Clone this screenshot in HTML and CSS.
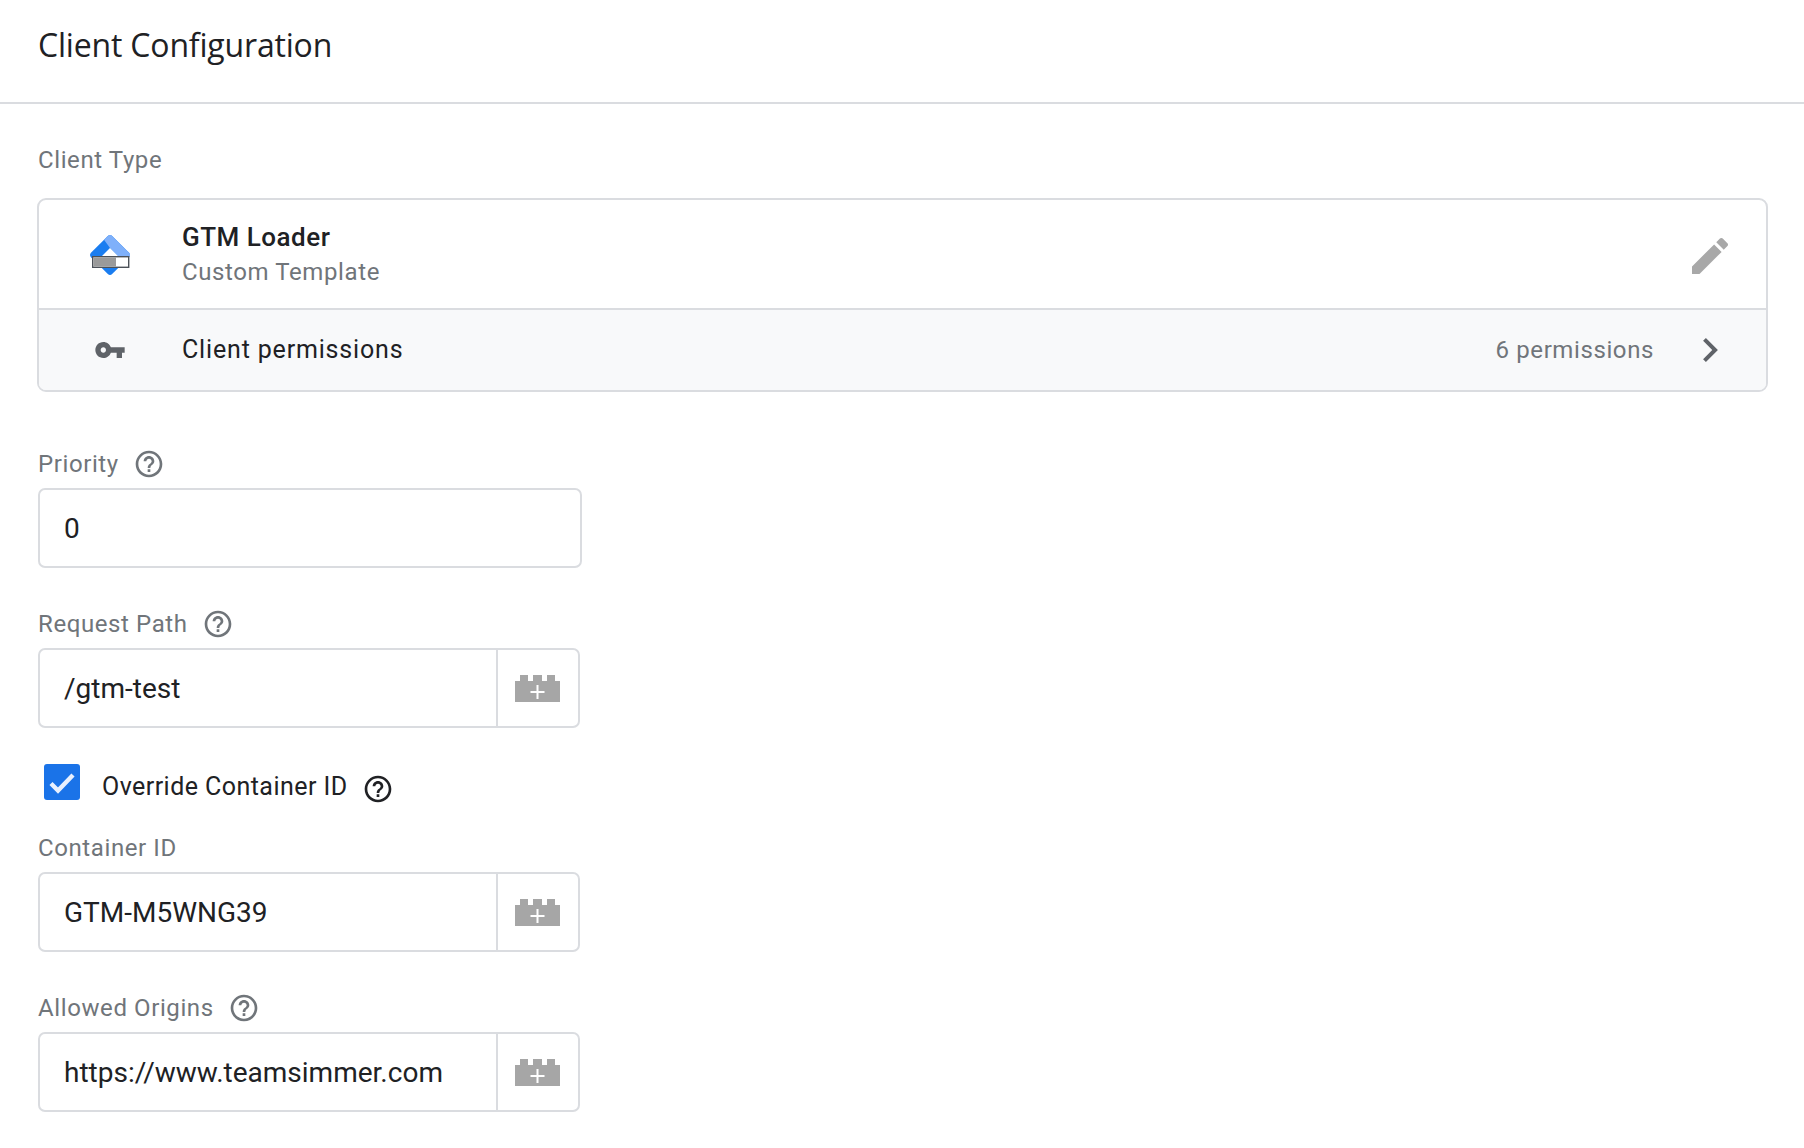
FILE: index.html
```html
<!DOCTYPE html>
<html lang="en">
<head>
<meta charset="utf-8">
<title>Client Configuration</title>
<link rel="stylesheet" href="styles.css">
</head>
<body>
<svg class="defs" width="0" height="0" aria-hidden="true">
  <defs>
    <symbol id="help" viewBox="0 0 24 24"><path d="M11 18h2v-2h-2v2zm1-16C6.48 2 2 6.48 2 12s4.48 10 10 10 10-4.48 10-10S17.52 2 12 2zm0 18c-4.41 0-8-3.59-8-8s3.59-8 8-8 8 3.59 8 8-3.59 8-8 8zm0-14c-2.21 0-4 1.79-4 4h2c0-1.1.9-2 2-2s2 .9 2 2c0 2-3 1.75-3 5h2c0-2.25 3-2.5 3-5 0-2.21-1.79-4-4-4z"/></symbol>
    <symbol id="brick" viewBox="0 0 45 28">
      <path d="M0 7h5V1h8v6h5V1h9v6h5V1h8v6h5v21H0z" fill="#a6a6a6"/>
      <path d="M22.5 11v14M15.5 18h14" stroke="#fff" stroke-width="2" fill="none"/>
    </symbol>
  </defs>
</svg>
<header class="page-header"><h1 class="page-title">Client Configuration</h1></header>
<main class="content">
  <div class="label label-first">Client Type</div>
  <section class="card">
    <div class="card-main">
      <svg class="logo" viewBox="0 0 40 42" width="40" height="42" aria-hidden="true">
        <path d="M17.600 1.200a3.400 3.400 0 0 1 4.800 0L38.800 17.600a3.400 3.400 0 0 1 0 4.800L22.400 38.800a3.400 3.400 0 0 1-4.800 0L1.200 22.400a3.400 3.400 0 0 1 0-4.800z" fill="#1a7df0"/>
        <path d="M14 4.800 17.600 1.200a3.400 3.400 0 0 1 4.800 0L38.800 17.600a3.400 3.400 0 0 1 1.200 3.400H28L20 13z" fill="#7fb0fa"/>
        <path d="M20 13 28 21H12z" fill="#fff"/>
        <rect x="2.700" y="21.700" width="36" height="10.600" fill="#fff" stroke="#4c5158" stroke-width="1.400"/>
        <rect x="3.400" y="22.400" width="22.600" height="9.200" fill="#9a9a9a"/>
      </svg>
      <div class="card-text">
        <div class="card-name">GTM Loader</div>
        <div class="card-sub">Custom Template</div>
      </div>
      <svg class="pencil" viewBox="3 3 18 18" width="36" height="36" aria-hidden="true"><path d="M3 17.25V21h3.75L17.81 9.94l-3.75-3.75L3 17.25zM20.71 7.04c.39-.39.39-1.02 0-1.41l-2.34-2.34c-.39-.39-1.02-.39-1.41 0l-1.83 1.83 3.75 3.75 1.83-1.83z"/></svg>
    </div>
    <div class="card-perms">
      <svg class="key" viewBox="1 6 22 12" width="30" height="16" aria-hidden="true"><path d="M12.65 10C11.83 7.67 9.61 6 7 6c-3.31 0-6 2.69-6 6s2.69 6 6 6c2.61 0 4.83-1.67 5.65-4H17v4h4v-4h2v-4H12.65zM7 14c-1.1 0-2-.9-2-2s.9-2 2-2 2 .9 2 2-.9 2-2 2z"/></svg>
      <div class="perm-title">Client permissions</div>
      <div class="perm-count">6 permissions</div>
      <svg class="chevron" viewBox="8.59 6 7.41 12" width="15" height="24" aria-hidden="true"><path d="M10 6L8.59 7.41 13.17 12l-4.58 4.59L10 18l6-6z"/></svg>
    </div>
  </section>

  <div class="field field-priority">
    <div class="label">Priority<svg class="help"><use href="#help"/></svg></div>
    <div class="input input-wide"><span class="value">0</span></div>
  </div>

  <div class="field">
    <div class="label">Request Path<svg class="help"><use href="#help"/></svg></div>
    <div class="input"><span class="value">/gtm-test</span><span class="var-btn"><svg class="brick"><use href="#brick"/></svg></span></div>
  </div>

  <div class="check-row">
    <span class="checkbox"><svg viewBox="0 0 36 36" width="36" height="36" aria-hidden="true"><path d="M7 19.500 14 26.500 29 11" fill="none" stroke="#e8f0fe" stroke-width="4.400"/></svg></span>
    <span class="check-label">Override Container ID</span>
    <svg class="help help-dark"><use href="#help"/></svg>
  </div>

  <div class="field field-after-check">
    <div class="label">Container ID</div>
    <div class="input"><span class="value">GTM-M5WNG39</span><span class="var-btn"><svg class="brick"><use href="#brick"/></svg></span></div>
  </div>

  <div class="field">
    <div class="label">Allowed Origins<svg class="help"><use href="#help"/></svg></div>
    <div class="input"><span class="value">https://www.teamsimmer.com</span><span class="var-btn"><svg class="brick"><use href="#brick"/></svg></span></div>
  </div>
</main>
</body>
</html>
```

FILE: styles.css
```css
* { box-sizing: border-box; }
html, body { margin: 0; padding: 0; background: #fff; }
body { font-family: Roboto, "Liberation Sans", sans-serif; color: #202124; height: 1148px; overflow: hidden; }
.defs { position: absolute; }

.page-header { height: 104px; border-bottom: 2px solid #dadce0; padding: 26px 38px 0; }
.page-title { margin: 0; font: 400 32px/38px "Open Sans", sans-serif; letter-spacing: -0.18px; color: #202124; }

.content { padding: 0 36px 0 38px; }
.label { display: flex; align-items: center; height: 32px; font-size: 24px; letter-spacing: 0.6px; color: #70757a; margin-bottom: 8px; }
.label-first { margin-top: 40px; margin-bottom: 22px; }
.help { width: 32px; height: 32px; margin-left: 14px; fill: #70757a; flex: none; }
.help-dark { fill: #202124; margin-left: 14px; }

.card { margin-left: -1px; border: 2px solid #dadce0; border-radius: 9px; overflow: hidden; height: 194px; }
.card-main { display: flex; align-items: center; height: 108px; padding-left: 51px; }
.logo { flex: none; margin: 3px 52px 0 0; }
.card-text { flex: 1; }
.card-name { font-size: 26px; font-weight: 500; line-height: 34px; letter-spacing: 0.5px; color: #202124; }
.card-sub { font-size: 24px; line-height: 34px; letter-spacing: 0.6px; color: #70757a; margin-top: 1px; }
.pencil { flex: none; fill: #a8a8a8; margin: 4px 38px 0 0; }
.card-perms { display: flex; align-items: center; height: 82px; border-top: 2px solid #dadce0; background: #f8f9fa; padding-left: 56px; }
.key { flex: none; fill: #5f6368; margin-right: 57px; }
.perm-title { flex: 1; font-size: 25px; letter-spacing: 0.83px; color: #202124; margin-bottom: 2px; }
.perm-count { font-size: 24px; letter-spacing: 0.6px; color: #70757a; margin-right: 49px; }
.chevron { flex: none; fill: #5f6368; margin-right: 48px; }

.field { margin-top: 40px; }
.field-priority { margin-top: 56px; }
.field-after-check { margin-top: 32px; }
.input { display: flex; align-items: stretch; width: 542px; height: 80px; border: 2px solid #dadce0; border-radius: 7px; }
.input-wide { width: 544px; }
.value { flex: 1; display: flex; align-items: center; padding-left: 24px; font-size: 28px; letter-spacing: 0; color: #202124; }
.var-btn { flex: none; display: flex; align-items: center; justify-content: center; width: 82px; padding-right: 2px; border-left: 2px solid #dadce0; }
.brick { width: 45px; height: 28px; }

.check-row { display: flex; align-items: flex-start; margin: 36px 0 0 6px; height: 36px; }
.checkbox { flex: none; width: 36px; height: 36px; border-radius: 3px; background: #1a73e8; }
.check-label { margin: 7px 0 0 22px; font-size: 25px; line-height: 32px; letter-spacing: 0.45px; color: #202124; }
.check-row .help { margin-top: 9px; }
```
